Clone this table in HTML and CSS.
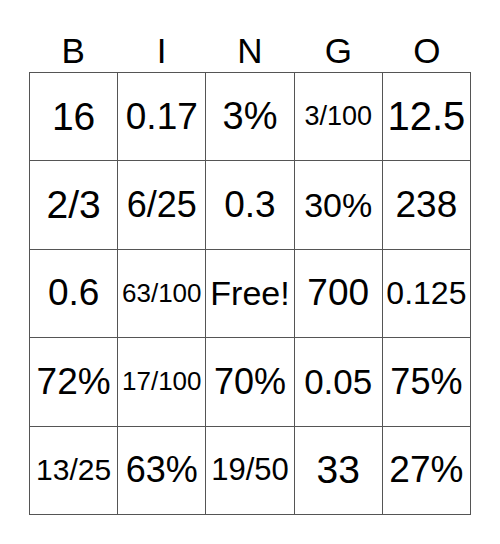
FILE: index.html
```html
<!DOCTYPE html>
<html>
<head>
<meta charset="utf-8">
<link rel="stylesheet" href="styles.css">
</head>
<body>
<div class="card">
  <div class="head">
    <div>B</div><div>I</div><div>N</div><div>G</div><div>O</div>
  </div>
  <div class="grid">
    <div class="cell s39">16</div>
    <div class="cell s37">0.17</div>
    <div class="cell s38">3%</div>
    <div class="cell s27">3/100</div>
    <div class="cell s40">12.5</div>

    <div class="cell s39">2/3</div>
    <div class="cell s36">6/25</div>
    <div class="cell s37">0.3</div>
    <div class="cell s34">30%</div>
    <div class="cell s37">238</div>

    <div class="cell s37">0.6</div>
    <div class="cell s26">63/100</div>
    <div class="cell s34">Free!</div>
    <div class="cell s37">700</div>
    <div class="cell s32">0.125</div>

    <div class="cell s37">72%</div>
    <div class="cell s26">17/100</div>
    <div class="cell s36">70%</div>
    <div class="cell s35">0.05</div>
    <div class="cell s36">75%</div>

    <div class="cell s30">13/25</div>
    <div class="cell s36">63%</div>
    <div class="cell s31">19/50</div>
    <div class="cell s39">33</div>
    <div class="cell s37">27%</div>
  </div>
</div>
</body>
</html>
```
FILE: styles.css
```css
html, body {
  margin: 0;
  padding: 0;
  background: #fff;
}
body {
  font-family: "Liberation Sans", Arial, sans-serif;
  color: #000;
}
.card {
  width: 442px;
  margin-left: 29px;
  padding-top: 30px;
}
.head {
  display: grid;
  grid-template-columns: repeat(5, 1fr);
  height: 42px;
  font-size: 35px;
  line-height: 42px;
  text-align: center;
}
.grid {
  display: grid;
  grid-template-columns: repeat(5, 1fr);
  grid-auto-rows: 88.4px;
  border-top: 1px solid #555;
  border-left: 1px solid #555;
}
.cell {
  border-right: 1px solid #555;
  border-bottom: 1px solid #555;
  display: flex;
  align-items: center;
  justify-content: center;
  white-space: nowrap;
  overflow: hidden;
}
.s40 { font-size: 40px; }
.s39 { font-size: 39px; }
.s38 { font-size: 38px; }
.s37 { font-size: 37px; }
.s36 { font-size: 36px; }
.s35 { font-size: 35px; }
.s34 { font-size: 34px; }
.s32 { font-size: 32px; }
.s31 { font-size: 31px; }
.s30 { font-size: 30px; }
.s27 { font-size: 27px; }
.s26 { font-size: 26px; }
```
